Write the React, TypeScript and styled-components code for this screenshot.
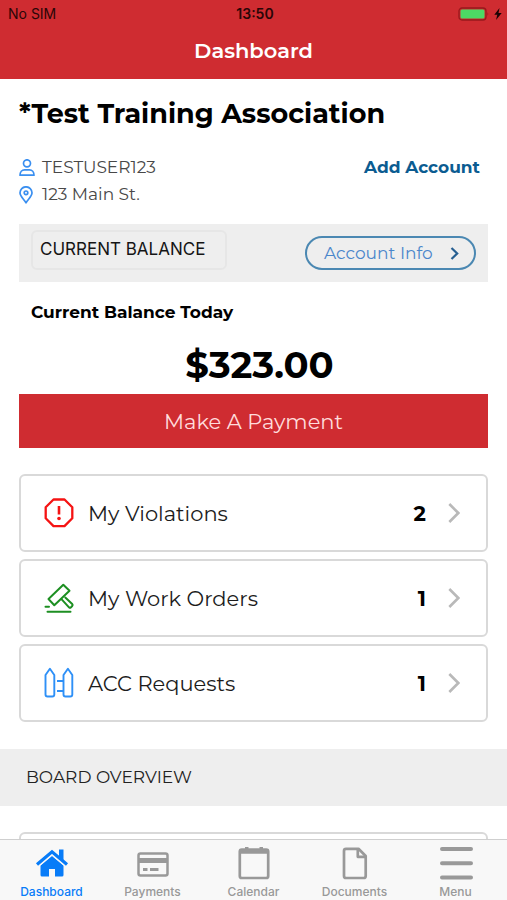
import React from "react";
import styled, { createGlobalStyle } from "styled-components";

const RED = "#cf2c31";
const FONT = `Montserrat, Inter, "Liberation Sans", sans-serif`;

const GlobalStyle = createGlobalStyle`
  *, *::before, *::after { box-sizing: border-box; }
  body { margin: 0; background: #fff; color: #000; font-family: ${FONT}; }
  h1, h2, h3, p, ul { margin: 0; padding: 0; }
  ul { list-style: none; }
  svg { display: block; flex: none; }
  button { font-family: inherit; cursor: pointer; }
`;

const Screen = styled.div`
  display: flex;
  flex-direction: column;
  height: 100vh;
`;

const Header = styled.header`
  flex: none;
  background: ${RED};
`;

const StatusBar = styled.div`
  display: grid;
  grid-template-columns: 1fr auto 1fr;
  align-items: center;
  height: 28px;
  padding: 0 5px 0 8px;
  font: 14px/20px Inter, sans-serif;
  color: #2a0607;
`;

const Clock = styled.time`
  font-weight: 600;
`;

const StatusIcons = styled.div`
  display: flex;
  justify-content: flex-end;
  align-items: center;
  gap: 4px;
`;

const HeaderTitle = styled.h1`
  padding: 11px 16px 16px;
  font-size: 21px;
  line-height: 24px;
  font-weight: 600;
  text-align: center;
  color: #fff;
`;

const Content = styled.main`
  flex: 1;
  min-height: 0;
  overflow-y: auto;
  scrollbar-width: none;
`;

const Section = styled.section`
  padding: 0 19px;
`;

const AssociationName = styled.h2`
  padding-top: 18px;
  font-size: 27px;
  line-height: 34px;
  font-weight: 700;
  white-space: nowrap;
`;

const AccountRow = styled.div`
  display: flex;
  justify-content: space-between;
  align-items: flex-start;
  padding: 23px 8px 16px 0;
`;

const AccountDetails = styled.ul`
  font-size: 17px;
  line-height: 27px;
  color: #484848;
`;

const AccountDetail = styled.li`
  display: flex;
  align-items: center;
  gap: 7px;
`;

const AddAccount = styled.a`
  font-size: 17px;
  line-height: 27px;
  font-weight: 700;
  color: #0b5c91;
  text-decoration: none;
`;

const BalanceBar = styled.div`
  display: flex;
  justify-content: space-between;
  align-items: center;
  height: 58px;
  padding: 0 12px;
  background: #eee;
`;

const BalanceLabel = styled.h3`
  width: 196px;
  height: 40px;
  margin-bottom: 6px;
  padding: 0 7px;
  border: 2px solid #e6e6e6;
  border-radius: 6px;
  font-family: Inter, sans-serif;
  font-size: 17px;
  line-height: 34px;
  font-weight: 400;
  color: #151515;
`;

const AccountInfo = styled.button`
  display: flex;
  justify-content: space-between;
  align-items: center;
  width: 171px;
  height: 34px;
  padding: 0 15px 0 17px;
  border: 2px solid #4b88b2;
  border-radius: 17px;
  background: transparent;
  font-size: 17px;
  color: #4a86cb;
`;

const BalanceCaption = styled.p`
  padding: 18px 12px 0;
  font-size: 17px;
  line-height: 24px;
  font-weight: 700;
`;

const BalanceAmount = styled.p`
  padding: 18px 0 7px 12px;
  font-size: 37px;
  line-height: 45px;
  font-weight: 700;
  text-align: center;
`;

const PayButton = styled.button`
  display: block;
  width: 100%;
  height: 54px;
  padding: 0;
  border: 0;
  background: ${RED};
  font-size: 21px;
  font-weight: 400;
  color: #ffdcdc;
`;

const CardList = styled.ul`
  display: flex;
  flex-direction: column;
  gap: 7px;
  padding: 26px 0 27px;
`;

const Card = styled.button`
  display: flex;
  align-items: center;
  width: 100%;
  height: 78px;
  padding: 0 26px 0 22px;
  border: 2px solid #d9d9d9;
  border-radius: 6px;
  background: #fff;
  font-size: 21px;
  color: #1c1c1c;
`;

const CardLabel = styled.span`
  flex: 1;
  padding-left: 13px;
  text-align: left;
`;

const CardCount = styled.span`
  padding-right: 22px;
  font-weight: 700;
  color: #000;
`;

const BoardHeading = styled.h3`
  padding: 0 26px;
  background: #eee;
  font-size: 17px;
  line-height: 57px;
  font-weight: 400;
  color: #222;
`;

const TabBar = styled.nav`
  flex: none;
  display: grid;
  grid-template-columns: repeat(5, 1fr);
  height: 61px;
  padding: 0 1px;
  border-top: 1px solid #cfcfcf;
  background: #f8f8f8;
`;

const Tab = styled.a<{ $active?: boolean }>`
  display: flex;
  flex-direction: column;
  align-items: center;
  gap: 3px;
  padding-top: 5px;
  font: 500 12px/16px Inter, sans-serif;
  text-decoration: none;
  color: ${(p) => (p.$active ? "#087cf8" : "#999")};
`;

const Battery = () => (
  <svg width="32" height="14" viewBox="0 0 32 14" aria-label="Battery charging">
    <rect x="1" y="1" width="27" height="12" rx="3" fill="none" stroke="#98191c" strokeWidth="1.3" />
    <rect x="2.5" y="2.5" width="24" height="9" rx="1.5" fill="#4cd964" />
    <path d="M29.5 5v4q1.6-2 0-4" fill="#98191c" />
  </svg>
);

const Bolt = () => (
  <svg width="8" height="12" viewBox="0 0 8 12" aria-hidden="true">
    <path d="M5.5 0L.3 6.7h3L2 12l5.700-7H4.500z" fill="#1a0304" />
  </svg>
);

const PersonIcon = () => (
  <svg width="16" height="18" viewBox="0 0 16 18" fill="none" stroke="#3a8ff0" strokeWidth="1.700" aria-hidden="true">
    <circle cx="8" cy="4.300" r="3.500" />
    <path d="M1 16.200C1 13 3 10.900 5.600 10.900h4.800c2.600 0 4.600 2.100 4.600 5.300z" strokeLinejoin="round" />
  </svg>
);

const PinIcon = () => (
  <svg width="16" height="18" viewBox="0 0 16 18" fill="none" stroke="#3a8ff0" strokeWidth="1.700" aria-hidden="true">
    <path d="M7 16.800C5.200 13.400 1 10.600 1 6.800a6 6 0 0112 0c0 3.800-4.200 6.600-6 10z" strokeLinejoin="round" />
    <circle cx="7" cy="6.800" r="1.800" />
  </svg>
);

const Chevron = ({ small }: { small?: boolean }) =>
  small ? (
    <svg width="9" height="14" viewBox="0 0 9 14" fill="none" stroke="#275f91" strokeWidth="2.200" aria-hidden="true">
      <path d="M1.500 2L7.200 7.500l-5.700 5.500" />
    </svg>
  ) : (
    <svg width="12" height="20" viewBox="0 0 12 20" fill="none" stroke="#b9b9b9" strokeWidth="2.600" aria-hidden="true">
      <path d="M1.300 1l9 9-9 9" />
    </svg>
  );

const ViolationIcon = () => (
  <svg width="32" height="32" viewBox="0 0 32 32" fill="none" stroke="#f51313" strokeWidth="2.300" aria-hidden="true">
    <path d="M10.500 2.500h11l7.800 7.800v11l-7.800 7.800h-11l-7.800-7.800v-11z" strokeLinejoin="round" />
    <path d="M16 9v8.500" strokeWidth="2.600" />
    <circle cx="16" cy="21.500" r="1.800" fill="#f51313" stroke="none" />
  </svg>
);

const GavelIcon = () => (
  <svg width="32" height="32" viewBox="0 0 32 32" fill="none" stroke="#1d8f22" strokeWidth="2" strokeLinejoin="round" strokeLinecap="round" aria-hidden="true">
    <path d="M20.300 2.700l6.200 6-15.200 14.500-5.800-6.200z" />
    <path d="M18.700 17.300l7.300 8q1 1 2 0l1.200-1.300q.9-1 0-2L22.300 15.500" />
    <path d="M2.500 24.800H6M4.500 29.800h23" />
  </svg>
);

const FenceIcon = () => (
  <svg width="32" height="32" viewBox="0 0 32 32" fill="none" stroke="#2e90f7" strokeWidth="1.900" strokeLinejoin="round" aria-hidden="true">
    <path d="M2.500 8L6.900 1.800 11.300 8V27.500q0 2-2 2H4.500q-2 0-2-2z" />
    <path d="M20.500 8L24.900 1.800 29.300 8V27.500q0 2-2 2H22.500q-2 0-2-2z" />
    <path d="M14 14h6.500M14 24h6.500" />
  </svg>
);

const HomeIcon = () => (
  <svg width="34" height="36" viewBox="0 0 34 36" fill="#087cf8" aria-hidden="true">
    <path d="M17 11L28.500 20.500V30a1.500 1.500 0 01-1.500 1.500h-7V24h-6v7.500H7A1.500 1.500 0 015.500 30v-9.500z" />
    <path d="M2 19.500L17 6.800l15 12.700" fill="none" stroke="#f8f8f8" strokeWidth="6" />
    <path d="M24 4.500h4.500V16L24 12z" />
    <path d="M2 19.500L17 6.800l15 12.700" fill="none" stroke="#087cf8" strokeWidth="3.200" />
  </svg>
);

const CardIcon = () => (
  <svg width="34" height="36" viewBox="0 0 34 36" fill="none" stroke="#999" aria-hidden="true">
    <rect x="2.500" y="8.500" width="29" height="22" rx="2" strokeWidth="2.500" />
    <path d="M2 15.500h30" strokeWidth="5" />
    <path d="M7 24.500h4.500M14 24.500h8.500" strokeWidth="2.800" />
  </svg>
);

const CalendarIcon = () => (
  <svg width="34" height="36" viewBox="0 0 34 36" fill="none" stroke="#999" aria-hidden="true">
    <rect x="2.800" y="4.500" width="28.400" height="28.500" rx="2" strokeWidth="2.700" />
    <path d="M2.500 6.500h29" strokeWidth="4.500" />
    <path d="M8 2h3.500v3H8zM22.500 2H26v3h-3.500z" fill="#999" stroke="none" />
  </svg>
);

const DocumentIcon = () => (
  <svg width="34" height="36" viewBox="0 0 34 36" fill="none" stroke="#999" strokeWidth="2.700" strokeLinejoin="round" aria-hidden="true">
    <path d="M8 3.800H20.500l7.200 7.200v20q0 2-2 2H8q-2 0-2-2V5.800q0-2 2-2" />
    <path d="M19.800 4v7.800h8" />
  </svg>
);

const MenuIcon = () => (
  <svg width="34" height="36" viewBox="0 0 34 36" fill="none" stroke="#999" strokeWidth="4" strokeLinecap="round" aria-hidden="true">
    <path d="M3 4h29M3 18.300h29M3 32.500h29" />
  </svg>
);

const cards = [
  { label: "My Violations", count: 2, Icon: ViolationIcon },
  { label: "My Work Orders", count: 1, Icon: GavelIcon },
  { label: "ACC Requests", count: 1, Icon: FenceIcon },
];

const tabs = [
  { label: "Dashboard", Icon: HomeIcon },
  { label: "Payments", Icon: CardIcon },
  { label: "Calendar", Icon: CalendarIcon },
  { label: "Documents", Icon: DocumentIcon },
  { label: "Menu", Icon: MenuIcon },
];

export default function App() {
  return (
    <Screen>
      <GlobalStyle />
      <Header>
        <StatusBar>
          <span>No SIM</span>
          <Clock>13:50</Clock>
          <StatusIcons>
            <Battery />
            <Bolt />
          </StatusIcons>
        </StatusBar>
        <HeaderTitle>Dashboard</HeaderTitle>
      </Header>

      <Content>
        <Section>
          <AssociationName>*Test Training Association</AssociationName>
          <AccountRow>
            <AccountDetails>
              <AccountDetail>
                <PersonIcon />
                TESTUSER123
              </AccountDetail>
              <AccountDetail>
                <PinIcon />
                123 Main St.
              </AccountDetail>
            </AccountDetails>
            <AddAccount href="#add-account">Add Account</AddAccount>
          </AccountRow>

          <BalanceBar>
            <BalanceLabel>CURRENT BALANCE</BalanceLabel>
            <AccountInfo type="button">
              Account Info
              <Chevron small />
            </AccountInfo>
          </BalanceBar>
          <BalanceCaption>Current Balance Today</BalanceCaption>
          <BalanceAmount>$323.00</BalanceAmount>
          <PayButton type="button">Make A Payment</PayButton>

          <CardList>
            {cards.map(({ label, count, Icon }) => (
              <li key={label}>
                <Card type="button">
                  <Icon />
                  <CardLabel>{label}</CardLabel>
                  <CardCount>{count}</CardCount>
                  <Chevron />
                </Card>
              </li>
            ))}
          </CardList>
        </Section>

        <BoardHeading>BOARD OVERVIEW</BoardHeading>
        <Section>
          <CardList>
            <li>
              <Card type="button" aria-label="Board overview" />
            </li>
          </CardList>
        </Section>
      </Content>

      <TabBar>
        {tabs.map(({ label, Icon }, i) => (
          <Tab key={label} href={`#${label.toLowerCase()}`} $active={i === 0} aria-current={i === 0 ? "page" : undefined}>
            <Icon />
            {label}
          </Tab>
        ))}
      </TabBar>
    </Screen>
  );
}
